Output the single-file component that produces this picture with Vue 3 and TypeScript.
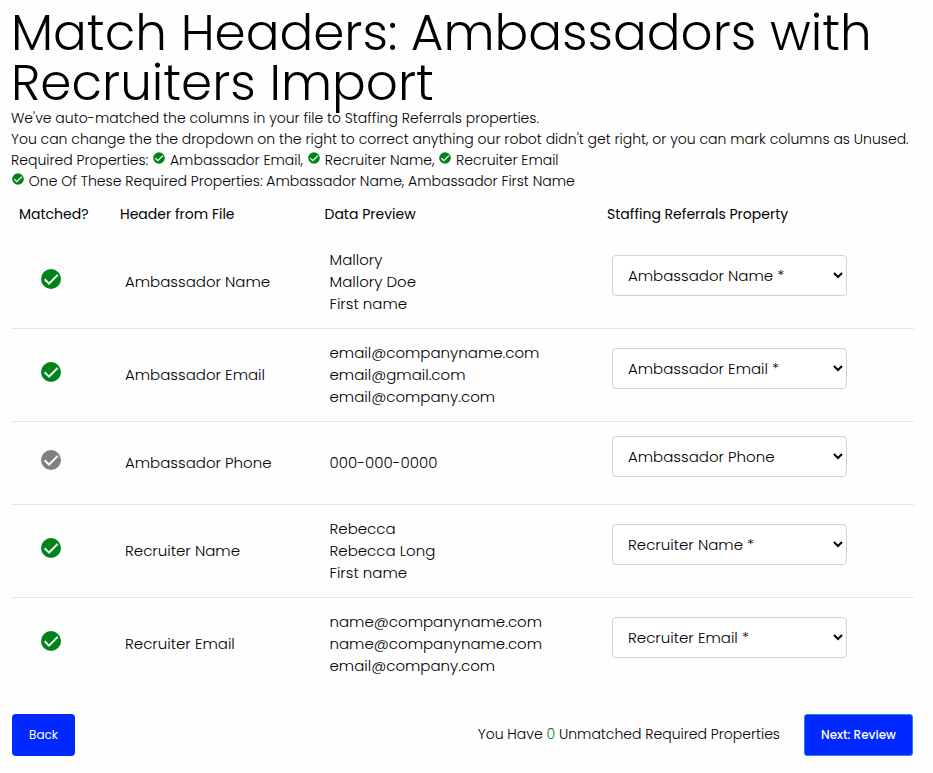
<script setup lang="ts">
import { defineComponent, h } from 'vue'

interface Row {
  header: string
  preview: string[]
  property: string
  matched: boolean
}

const rows: Row[] = [
  { header: 'Ambassador Name', preview: ['Mallory', 'Mallory Doe', 'First name'], property: 'Ambassador Name *', matched: true },
  { header: 'Ambassador Email', preview: ['email@companyname.com', 'email@gmail.com', 'email@company.com'], property: 'Ambassador Email *', matched: true },
  { header: 'Ambassador Phone', preview: ['000-000-0000'], property: 'Ambassador Phone', matched: false },
  { header: 'Recruiter Name', preview: ['Rebecca', 'Rebecca Long', 'First name'], property: 'Recruiter Name *', matched: true },
  { header: 'Recruiter Email', preview: ['name@companyname.com', 'name@companyname.com', 'email@company.com'], property: 'Recruiter Email *', matched: true },
]

const CheckIcon = defineComponent({
  setup: () => () =>
    h('svg', { viewBox: '0 0 24 24', 'aria-hidden': 'true' }, [
      h('circle', { cx: 12, cy: 12, r: 10, fill: 'currentColor' }),
      h('path', { d: 'M5.7 12.3 10 16.6 18.7 7.9', fill: 'none', stroke: '#fff', 'stroke-width': 2 }),
    ]),
})
</script>

<template>
  <main class="page">
    <h1>Match Headers: Ambassadors with Recruiters Import</h1>
    <div class="intro">
      <p>We've auto-matched the columns in your file to Staffing Referrals properties.</p>
      <p>You can change the the dropdown on the right to correct anything our robot didn't get right, or you can mark columns as Unused.</p>
      <p>
        Required Properties: <CheckIcon class="mini" /> Ambassador Email,
        <CheckIcon class="mini" /> Recruiter Name,
        <CheckIcon class="mini" /> Recruiter Email
      </p>
      <p><CheckIcon class="mini" /> One Of These Required Properties: Ambassador Name, Ambassador First Name</p>
    </div>
    <section class="table">
      <div class="grid head">
        <div>Matched?</div>
        <div>Header from File</div>
        <div>Data Preview</div>
        <div>Staffing Referrals Property</div>
      </div>
      <div v-for="row in rows" :key="row.header" class="grid row">
        <div class="status"><CheckIcon class="check" :class="{ off: !row.matched }" /></div>
        <div class="cell">{{ row.header }}</div>
        <div class="cell preview">
          <div v-for="(line, i) in row.preview" :key="i">{{ line }}</div>
        </div>
        <div class="cell">
          <select><option>{{ row.property }}</option></select>
        </div>
      </div>
    </section>
    <footer>
      <button class="back">Back</button>
      <div class="right">
        <div class="summary">You Have <b>0</b> Unmatched Required Properties</div>
        <button class="next">Next: Review</button>
      </div>
    </footer>
  </main>
</template>

<style>
body { background: #fefefe; }
</style>

<style scoped>
.page { box-sizing: border-box; width: 933px; padding: 8px 19px 0 11px; font-family: Poppins, Inter, sans-serif; font-weight: 300; color: #000; font-size: 14px; }
h1 { margin: 0; font-size: 50px; line-height: 50px; font-weight: 300; height: 100px; }
.intro p { margin: 0; height: 21px; line-height: 21px; white-space: nowrap; }
.mini { width: 14px; height: 14px; color: #00841a; vertical-align: 0; }
.grid { display: grid; grid-template-columns: 109px 204.5px 282.5px 1fr; align-items: center; }
.head { height: 44px; font-weight: 400; padding-left: 8px; grid-template-columns: 101px 204.5px 282.5px 1fr; }
.row { min-height: 82px; border-bottom: 1px solid #e6e6e6; }
.row:last-child { border-bottom-color: transparent; }
.cell { font-size: 15px; line-height: 22px; padding: 13px 5px; }
.status { padding-left: 28px; }
.check { display: block; width: 24px; height: 24px; margin-bottom: 6px; color: #00841a; }
.check.off { color: #808080; }
select { display: block; box-sizing: border-box; width: 235px; height: 41px; margin-bottom: 13px; padding: 0 0 0 11px; border: 1px solid #d0d0da; border-radius: 4px; background: #fff; font: inherit; color: #000; }
footer { display: flex; justify-content: space-between; padding: 23px 1px 0; }
.right { display: flex; align-items: center; gap: 24px; }
.summary { padding-bottom: 1px; }
b { font-weight: 300; color: #00841a; }
button { height: 42px; padding: 0; border: 0; border-radius: 4px; background: #0028ff; color: #fff; font: inherit; font-size: 12px; }
.back { width: 63px; font-weight: 400; }
.next { width: 109px; font-weight: 500; border: 1px solid #1d8be0; border-radius: 3px; }
</style>
